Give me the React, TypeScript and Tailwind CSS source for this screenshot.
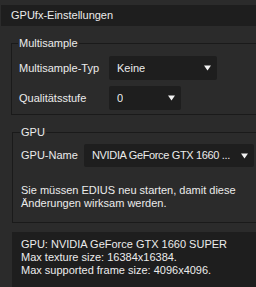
function Arrow() {
  return (
    <svg width="7" height="6" viewBox="0 0 7 6" className="shrink-0">
      <polygon points="0,0.5 7,0.5 3.5,5.5" fill="#f2f2f2" />
    </svg>
  );
}

function Select({ value, width, height = 'h-[24px]', tight = false }: { value: string; width: string; height?: string; tight?: boolean }) {
  return (
    <div className={`${width} ${height} pl-[8px] pr-[6px] flex items-center justify-between gap-[8px] rounded-[2px] bg-[#1e1e1e]`}>
      <span className={`whitespace-nowrap min-w-0 overflow-hidden ${tight ? 'tracking-[-0.35px]' : ''}`}>{value}</span>
      <Arrow />
    </div>
  );
}

export default function App() {
  return (
    <div className="w-[256px] h-[287px] overflow-hidden flex flex-col bg-[#2b2b2b] text-[11px] leading-[13px] text-[#ececec] font-['Liberation_Sans',Arial,sans-serif]">
      <div className="mt-[5px] ml-[1px] h-[21px] shrink-0 flex items-center pl-[10px] bg-[#1e1e1e]">
        GPUfx-Einstellungen
      </div>

      <fieldset className="ml-[11px] mt-[10px] w-[260px] shrink-0 border border-r-0 border-[#1a1a1a] pl-[7px] pt-[6px] pb-[4px]">
        <legend className="-ml-[1px] px-[1px] leading-[14px]">Multisample</legend>
        <div className="flex flex-col gap-[6px]">
          <div className="flex items-center">
            <span className="w-[90px]">Multisample-Typ</span>
            <Select value="Keine" width="w-[108px]" />
          </div>
          <div className="flex items-center">
            <span className="w-[90px]">Qualitätsstufe</span>
            <Select value="0" width="w-[72px]" />
          </div>
        </div>
      </fieldset>

      <fieldset className="ml-[12px] mt-[10px] w-[260px] shrink-0 border border-r-0 border-[#1a1a1a] pl-[8px] pt-[5px] pb-[12px]">
        <legend className="-ml-[1px] px-[1px] leading-[14px]">GPU</legend>
        <div className="flex items-center">
          <span className="w-[63px]">GPU-Name</span>
          <Select value="NVIDIA GeForce GTX 1660 ..." width="w-[170px]" height="h-[23px]" tight />
        </div>
        <p className="mt-[17px]">
          Sie müssen EDIUS neu starten, damit diese
          <br />
          Änderungen wirksam werden.
        </p>
      </fieldset>

      <div className="ml-[12px] mt-[9px] flex-1 bg-[#1e1e1e] pl-[9px] pt-[6px]">
        <p>GPU: NVIDIA GeForce GTX 1660 SUPER</p>
        <p>Max texture size: 16384x16384.</p>
        <p>Max supported frame size: 4096x4096.</p>
      </div>
    </div>
  );
}
